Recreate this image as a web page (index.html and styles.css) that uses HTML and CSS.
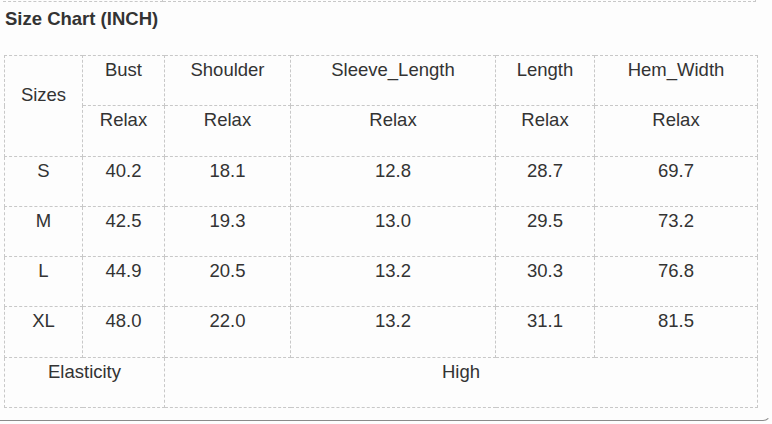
FILE: index.html
```html
<!DOCTYPE html>
<html>
<head>
<meta charset="utf-8">
<link rel="stylesheet" href="styles.css">
</head>
<body>
<div class="panel">
  <div class="prev"><div class="prev-a"></div><div class="prev-b"></div></div>
  <h2 class="title">Size Chart (INCH)</h2>
  <table class="chart">
    <colgroup>
      <col class="c1"><col class="c2"><col class="c3"><col class="c4"><col class="c5"><col class="c6">
    </colgroup>
    <tr><td rowspan="2" class="cell">Sizes</td><td class="cell">Bust</td><td class="cell">Shoulder</td><td class="cell">Sleeve_Length</td><td class="cell">Length</td><td class="cell">Hem_Width</td></tr>
    <tr><td class="cell">Relax</td><td class="cell">Relax</td><td class="cell">Relax</td><td class="cell">Relax</td><td class="cell">Relax</td></tr>
    <tr><td class="cell">S</td><td class="cell">40.2</td><td class="cell">18.1</td><td class="cell">12.8</td><td class="cell">28.7</td><td class="cell">69.7</td></tr>
    <tr><td class="cell">M</td><td class="cell">42.5</td><td class="cell">19.3</td><td class="cell">13.0</td><td class="cell">29.5</td><td class="cell">73.2</td></tr>
    <tr><td class="cell">L</td><td class="cell">44.9</td><td class="cell">20.5</td><td class="cell">13.2</td><td class="cell">30.3</td><td class="cell">76.8</td></tr>
    <tr><td class="cell">XL</td><td class="cell">48.0</td><td class="cell">22.0</td><td class="cell">13.2</td><td class="cell">31.1</td><td class="cell">81.5</td></tr>
    <tr><td colspan="2" class="cell">Elasticity</td><td colspan="4" class="cell">High</td></tr>
  </table>
</div>
</body>
</html>
```
FILE: styles.css
```css
html, body {
  margin: 0;
  padding: 0;
  background: #fdfdfd;
}
body {
  font-family: "Liberation Sans", Arial, sans-serif;
  color: #333;
}
.panel {
  width: 771px;
  height: 421px;
  box-sizing: border-box;
  padding: 0 0 0 4px;
  border-bottom: 1px solid #8a8a8a;
  border-right: 1px solid transparent;
  border-bottom-right-radius: 8px;
  overflow: hidden;
}
.prev {
  display: flex;
  height: 2px;
  width: 753px;
  margin-left: -1px;
}
.prev-a {
  width: 159px;
  border-bottom: 1px dashed #c8c8c8;
  border-right: 1px dashed #c8c8c8;
}
.prev-b {
  flex: 1;
  border-bottom: 1px dashed #c8c8c8;
  border-right: 1px dashed #c8c8c8;
}
.title {
  margin: 5px 0 0 1px;
  font-size: 18.5px;
  line-height: 24px;
  font-weight: bold;
  color: #333;
  height: 48px;
}
.chart {
  border-collapse: collapse;
  table-layout: fixed;
  width: 753px;
}
.c1 { width: 78px; }
.c2 { width: 82px; }
.c3 { width: 126px; }
.c4 { width: 205px; }
.c5 { width: 99px; }
.c6 { width: 163px; }
.cell {
  border: 1px dashed #c8c8c8;
  text-align: center;
  vertical-align: middle;
  font-size: 18.5px;
  line-height: 22px;
  padding: 3px 4px 24.3px;
  height: 22px;
}
```
